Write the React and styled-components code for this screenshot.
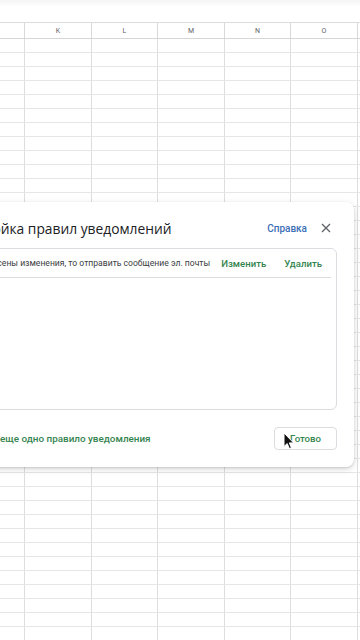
import React from 'react'
import styled, { createGlobalStyle } from 'styled-components'

const GlobalStyle = createGlobalStyle`
  html, body { margin: 0; padding: 0; background: #fff; }
  body { font-family: Roboto, "Liberation Sans", sans-serif; overflow: hidden; }
`

const COLS = ['', 'K', 'L', 'M', 'N', 'O', '']
const WIDTHS = [25, 67, 66, 67, 66, 67, 12]
const ROW_COUNT = 44

function App() {
    return (
        <Page>
            <GlobalStyle />
            <TopBar />
            <Sheet>
                <HeaderRow>
                    {COLS.map((c, i) => (
                        <HeadCell key={i} w={WIDTHS[i]}>{c}</HeadCell>
                    ))}
                </HeaderRow>
                {Array.from({ length: ROW_COUNT }).map((_, r) => (
                    <Row key={r}>
                        {WIDTHS.map((w, i) => <Cell key={i} w={w} />)}
                    </Row>
                ))}
            </Sheet>

            <Dialog>
                <DialogHeader>
                    <Title>Настройка правил уведомлений</Title>
                    <HelpLink>Справка</HelpLink>
                    <CloseBtn>
                        <svg width="10" height="10" viewBox="0 0 10 10">
                            <path d="M1 1 L9 9 M9 1 L1 9" stroke="#5f6368" strokeWidth="1.3" />
                        </svg>
                    </CloseBtn>
                </DialogHeader>
                <RulesBox>
                    <RuleRow>
                        <RuleText>Если внесены изменения, то отправить сообщение эл. почты</RuleText>
                        <RuleAction gap={11}>Изменить</RuleAction>
                        <RuleAction gap={18}>Удалить</RuleAction>
                    </RuleRow>
                </RulesBox>
                <Footer>
                    <AddLink>Добавить еще одно правило уведомления</AddLink>
                    <DoneButton>Готово</DoneButton>
                </Footer>
            </Dialog>

            <Cursor>
                <svg width="12" height="18" viewBox="0 0 12 18">
                    <path d="M1 1 L1 14.5 L4.2 11.6 L6.4 16.6 L8.4 15.7 L6.3 10.9 L10.6 10.9 Z" fill="#111" stroke="#fff" strokeWidth="1" strokeLinejoin="round" />
                </svg>
            </Cursor>
        </Page>
    )
}

export default App

const Page = styled.div`
position: relative;
width: 360px;
height: 640px;
overflow: hidden;
background: #fff;
`

const TopBar = styled.div`
height: 22px;
background: linear-gradient(#f4f5f6, #fff 30%);
`

const Sheet = styled.div`
display: flex;
flex-direction: column;
border-top: 1px solid #dcdcdc;
`

const HeaderRow = styled.div`
display: flex;
height: 15px;
border-bottom: 1px solid #d6d6d6;
`

const HeadCell = styled.div`
flex: 0 0 ${p => p.w}px;
box-sizing: border-box;
border-right: 1px solid #d9d9d9;
display: flex;
align-items: center;
justify-content: center;
font-size: 7px;
color: #5f6368;
`

const Row = styled.div`
display: flex;
height: 13px;
border-bottom: 1px solid #e6e6e6;
`

const Cell = styled.div`
flex: 0 0 ${p => p.w}px;
box-sizing: border-box;
border-right: 1px solid #dedede;
`

const Dialog = styled.div`
position: absolute;
top: 202px;
left: -75px;
right: 6px;
height: 265px;
box-sizing: border-box;
background: #fff;
border-radius: 8px;
box-shadow: 0 2px 6px rgba(60, 64, 67, 0.2), 0 1px 2px rgba(60, 64, 67, 0.15);
padding: 16px 17px 17px 28px;
display: flex;
flex-direction: column;
`

const DialogHeader = styled.div`
display: flex;
align-items: center;
height: 20px;
padding-right: 6px;
`

const Title = styled.div`
flex: 1;
font-family: "Open Sans", Roboto, sans-serif;
font-size: 13.8px;
color: #202124;
white-space: nowrap;
`

const HelpLink = styled.span`
font-size: 10px;
font-weight: 500;
color: #3b6fb6;
margin-right: 14px;
`

const CloseBtn = styled.span`
display: flex;
width: 10px;
height: 10px;
`

const RulesBox = styled.div`
margin-top: 10px;
height: 162px;
box-sizing: border-box;
border: 1px solid #dadce0;
border-radius: 6px;
padding: 0 5px 0 0;
`

const RuleRow = styled.div`
display: flex;
align-items: center;
justify-content: flex-end;
height: 28px;
border-bottom: 1px solid #dadce0;
padding: 0 9px 0 14px;
`

const RuleText = styled.span`
flex: 0 0 auto;
font-size: 8.6px;
color: #3c4043;
white-space: nowrap;
`

const RuleAction = styled.span`
flex: 0 0 auto;
font-size: 9.6px;
font-weight: 500;
color: #35844f;
margin-left: ${p => p.gap}px;
`

const Footer = styled.div`
margin-top: auto;
display: flex;
align-items: center;
justify-content: space-between;
`

const AddLink = styled.span`
font-size: 9.9px;
font-weight: 500;
color: #35844f;
white-space: nowrap;
margin-left: -1px;
`

const DoneButton = styled.button`
width: 63px;
height: 23px;
border: 1px solid #dadce0;
border-radius: 4px;
background: #fff;
font-family: Roboto, sans-serif;
font-size: 9.6px;
font-weight: 500;
color: #35844f;
padding: 0;
`

const Cursor = styled.div`
position: absolute;
left: 283px;
top: 432px;
display: flex;
`
